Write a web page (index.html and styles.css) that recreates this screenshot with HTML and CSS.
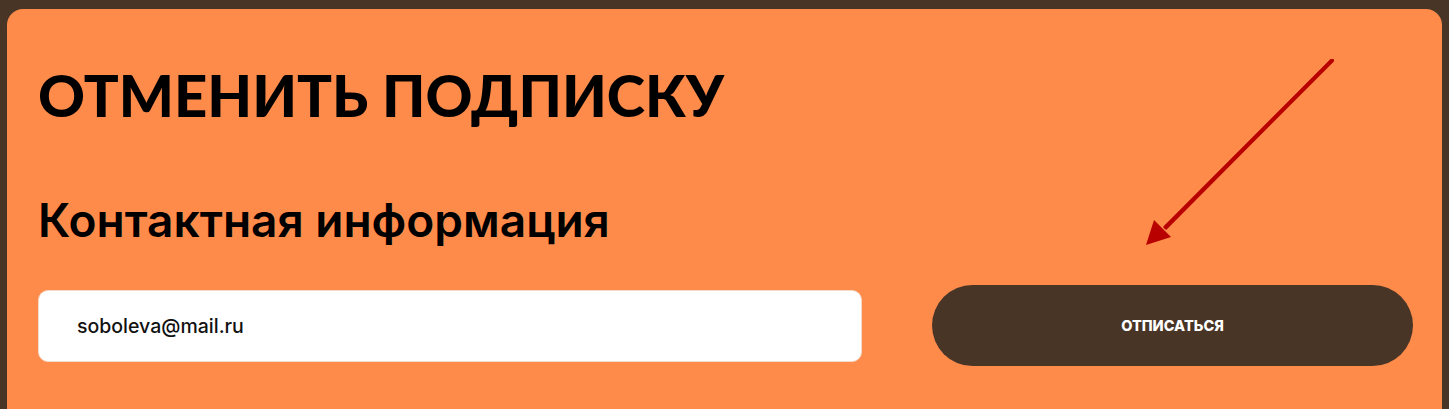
FILE: index.html
```html
<!DOCTYPE html>
<html lang="ru">
<head>
<meta charset="utf-8">
<link rel="stylesheet" href="styles.css">
</head>
<body>
<div class="page">
  <section class="card">
    <h1 class="title">ОТМЕНИТЬ ПОДПИСКУ</h1>
    <h2 class="subtitle">Контактная информация</h2>
    <div class="row">
      <div class="field">soboleva@mail.ru</div>
      <button class="btn">ОТПИСАТЬСЯ</button>
    </div>
    <svg class="arrow" width="200" height="195" viewBox="0 0 200 195">
      <polygon points="184.5,0.5 186.5,2.5 20,171 17,168" fill="#b80000"/>
      <path d="M186,1.5 L20,168" stroke="#b80000" stroke-width="4" stroke-linecap="round" fill="none"/>
      <polygon points="0,186 8,161 25,178" fill="#b80000"/>
    </svg>
  </section>
</div>
</body>
</html>
```

FILE: styles.css
```css
html, body {
  margin: 0;
  padding: 0;
  background: #483526;
}
.page {
  padding: 9px 7px 0 7px;
  height: 400px;
}
.card {
  position: relative;
  box-sizing: border-box;
  height: 416px;
  background: #ff8b4b;
  border-radius: 16px;
  padding: 48px 29px 0 31px;
  font-family: Inter, "Noto Sans", sans-serif;
  color: #000;
}
.title {
  margin: 0;
  font-family: Lato, Inter, sans-serif;
  font-size: 58px;
  font-weight: 900;
  line-height: 76px;
  letter-spacing: 0;
}
.subtitle {
  margin: 60px 0 0 0;
  font-size: 46px;
  font-weight: 600;
  line-height: 54px;
}
.row {
  display: flex;
  align-items: center;
  margin-top: 38px;
  gap: 70px;
}
.field {
  box-sizing: border-box;
  width: 824px;
  height: 72px;
  background: #fff;
  border: 1px solid #f3d9c8;
  border-radius: 10px;
  padding-left: 38px;
  display: flex;
  align-items: center;
  font-size: 19.5px;
  font-weight: 500;
  color: #111;
}
.btn {
  width: 481px;
  height: 81px;
  border: 0;
  border-radius: 41px;
  background: #483526;
  color: #fff;
  font-family: Inter, "Noto Sans", sans-serif;
  font-size: 14.5px;
  font-weight: 800;
}
.arrow {
  position: absolute;
  left: 1139px;
  top: 50px;
}
```
